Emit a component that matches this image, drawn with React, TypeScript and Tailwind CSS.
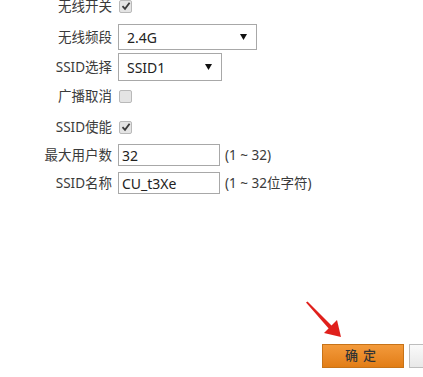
import React from "react";

const FONT = "font-['Noto_Sans','Noto_Sans_CJK_SC',sans-serif]";

function Check({ checked }: { checked: boolean }) {
  return (
    <span className="flex h-[13px] w-[13px] items-center justify-center rounded-[2px] border border-[#b9b9b9] bg-[#e4e4e4]">
      {checked && (
        <svg width="10" height="10" viewBox="0 0 10 10">
          <path d="M1.5 5.2 L4 7.8 L8.6 1.8" fill="none" stroke="#3a3a3a" strokeWidth="1.8" />
        </svg>
      )}
    </span>
  );
}

function Select({ value, width, height }: { value: string; width: string; height: string }) {
  return (
    <div className={`flex items-center justify-between border border-[#a8a8a8] bg-white pl-[8px] pr-[9px] text-[14px] text-[#222] ${width} ${height}`}>
      <span>{value}</span>
      <svg width="7" height="6" viewBox="0 0 7 6">
        <path d="M0 0 H7 L3.5 6 Z" fill="#111" />
      </svg>
    </div>
  );
}

function Row({ label, children, className }: { label: string; children: React.ReactNode; className: string }) {
  return (
    <div className={`flex h-[26px] items-center ${className}`}>
      <div className="w-[112px] shrink-0 text-right text-[13.5px] text-[#3a3a3a]">{label}</div>
      <div className="ml-[6px] flex items-center">{children}</div>
    </div>
  );
}

export default function App() {
  return (
    <div className={`relative h-[377px] w-[423px] overflow-hidden bg-white ${FONT}`}>
      <div className="-mt-[7px] flex flex-col">
        <Row label="无线开关" className="">
          <span className="ml-px"><Check checked /></span>
        </Row>
        <Row label="无线频段" className="mt-[5px]">
          <Select value="2.4G" width="w-[139px]" height="h-[26px]" />
        </Row>
        <Row label="SSID选择" className="mt-[4px]">
          <Select value="SSID1" width="w-[104px]" height="h-[28px]" />
        </Row>
        <Row label="广播取消" className="mt-[3px]">
          <span className="ml-px"><Check checked={false} /></span>
        </Row>
        <Row label="SSID使能" className="mt-[5px]">
          <span className="ml-px"><Check checked /></span>
        </Row>
        <Row label="最大用户数" className="mt-[2px]">
          <div className="flex h-[22px] w-[102px] items-center border border-[#a8a8a8] bg-white pl-[3px] text-[14px] text-[#222]">32</div>
          <span className="ml-[5px] text-[13.5px] text-[#3a3a3a]">(1 ~ 32)</span>
        </Row>
        <Row label="SSID名称" className="mt-[2px]">
          <div className="flex h-[22px] w-[102px] items-center border border-[#a8a8a8] bg-white pl-[3px] text-[14px] text-[#222]">CU_t3Xe</div>
          <span className="ml-[5px] text-[13.5px] text-[#3a3a3a]">(1 ~ 32位字符)</span>
        </Row>
      </div>

      <div className="mt-[148px] ml-[322px] flex gap-[5px]">
        <button className="flex h-[24px] w-[82px] shrink-0 items-center justify-center border border-[#c77318] bg-gradient-to-b from-[#f39a3a] to-[#e27d14] text-[13px] font-medium tracking-[5px] text-[#333]">
          确定
        </button>
        <button className="h-[24px] w-[82px] shrink-0 border border-[#bdbdbd] bg-gradient-to-b from-[#fafafa] to-[#e8e8e8]" />
      </div>

      <svg className="absolute left-[300px] top-[298px]" width="48" height="46" viewBox="0 0 48 46">
        <path d="M6 4.5 L7.5 3.5 L33 29 L30 32 Z" fill="#e0201c" />
        <path d="M41 39 L24 35 L37 22 Z" fill="#e0201c" />
      </svg>
    </div>
  );
}
